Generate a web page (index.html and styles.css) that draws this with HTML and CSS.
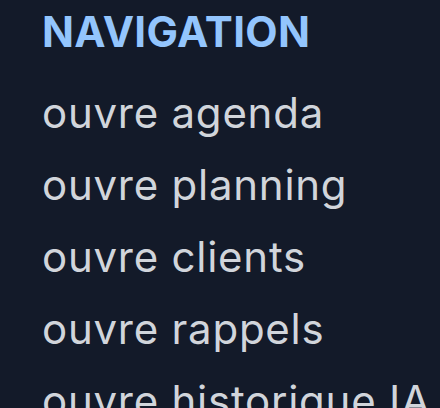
FILE: index.html
```
<!DOCTYPE html>
<html lang="fr">
<head>
<meta charset="utf-8">
<link rel="stylesheet" href="styles.css">
</head>
<body>
<section class="nav">
  <h2 class="nav-title">NAVIGATION</h2>
  <ul class="nav-list">
    <li>ouvre agenda</li>
    <li>ouvre planning</li>
    <li>ouvre clients</li>
    <li>ouvre rappels</li>
    <li>ouvre historique IA</li>
  </ul>
</section>
</body>
</html>
```
FILE: styles.css
```
html, body {
  margin: 0;
  padding: 0;
  background: #131a29;
  height: 100%;
  overflow: hidden;
}
.nav {
  padding: 4px 0 0 42px;
  font-family: Inter, "Noto Sans", sans-serif;
}
.nav-title {
  margin: 0 0 17px;
  font-size: 42px;
  line-height: 56px;
  font-weight: 700;
  letter-spacing: 0.3px;
  color: #93c5fd;
}
.nav-list {
  list-style: none;
  margin: 0;
  padding: 0;
}
.nav-list li {
  font-size: 42px;
  line-height: 72px;
  letter-spacing: 0.75px;
  white-space: nowrap;
  color: #d1d5db;
}
```
